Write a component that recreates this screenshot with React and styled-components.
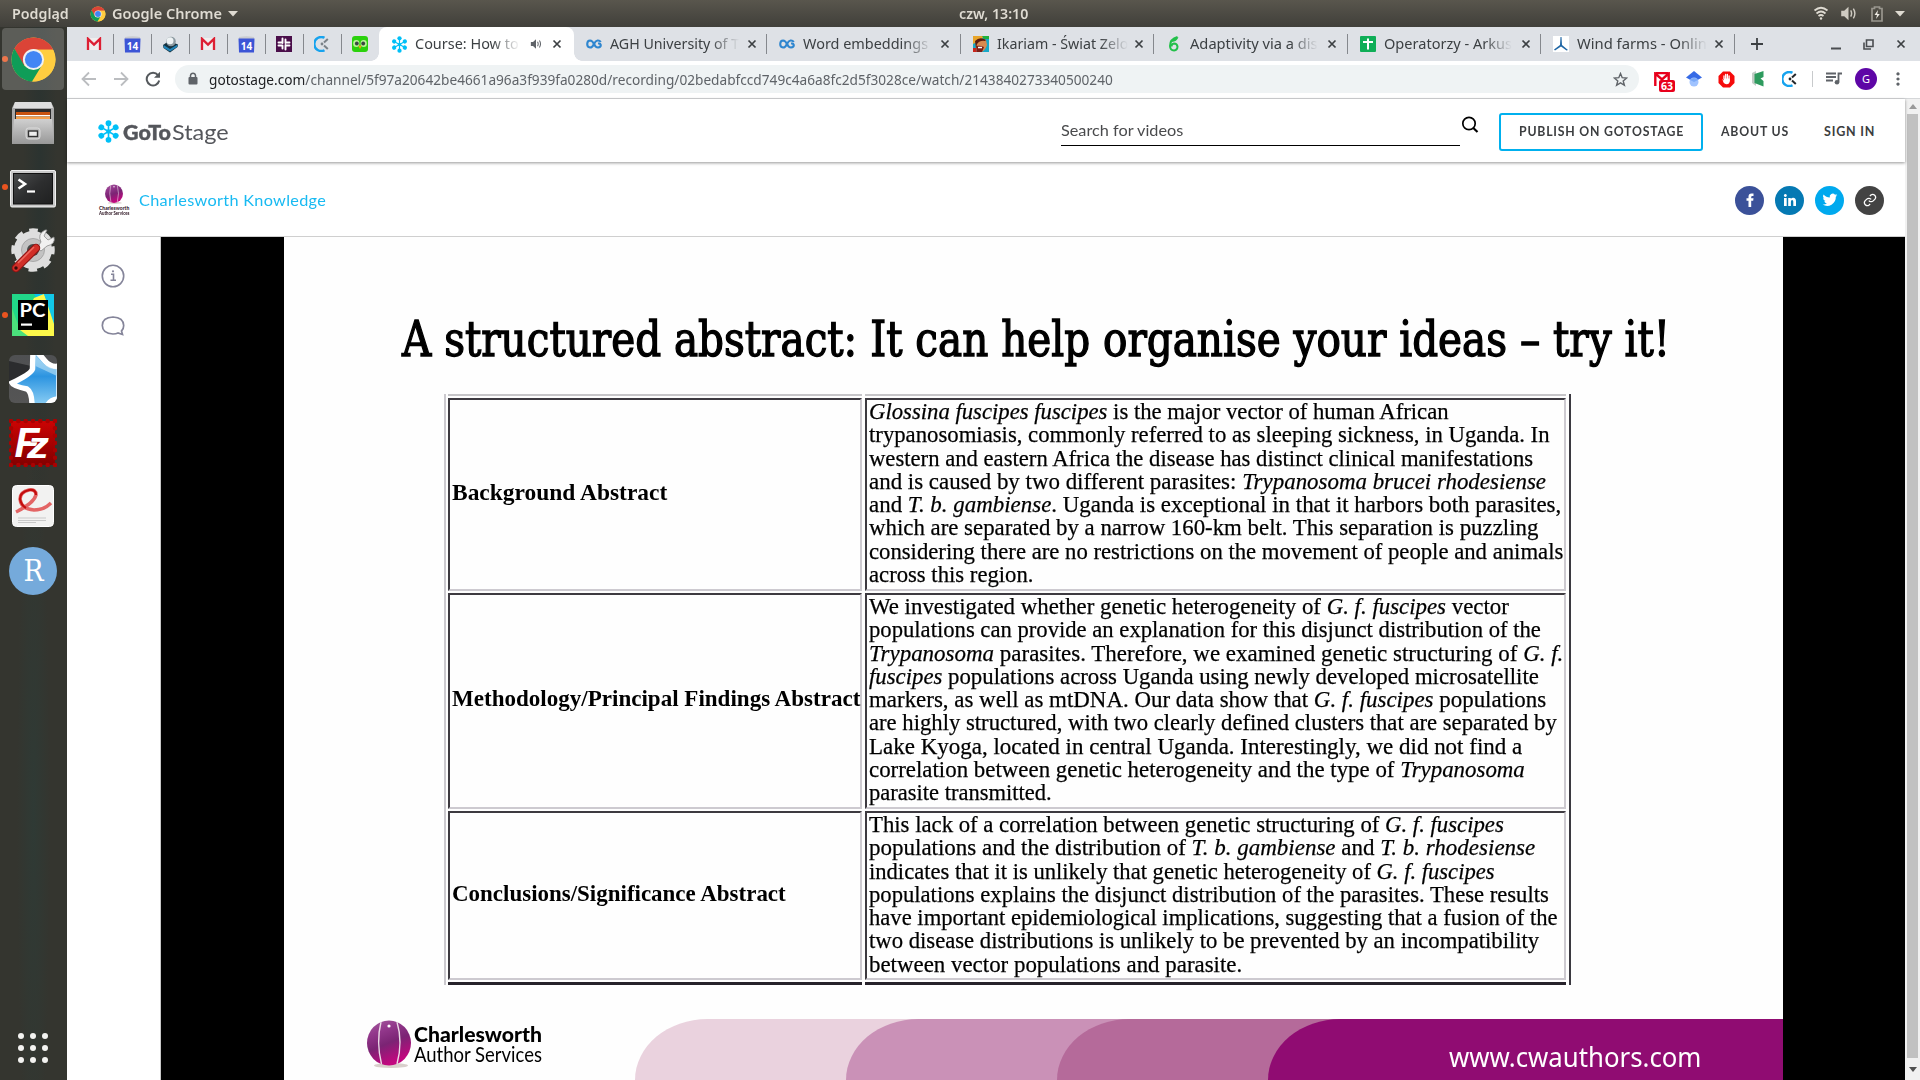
import React, { useLayoutEffect, useRef } from "react";
import styled, { createGlobalStyle, css } from "styled-components";

const ui = `"Noto Sans", "Open Sans", sans-serif`;
const lato = `Lato, "Open Sans", sans-serif`;
const serif = `"Liberation Serif", "Times New Roman", serif`;

const Global = createGlobalStyle`
  * { box-sizing: border-box; }
  body { margin: 0; overflow: hidden; background: #33352f; }
  svg { display: block; flex: none; }
`;

/* ---------- text set to a given measure ---------- */
const Measure = styled.span`
  display: block;
  flex: none;
  white-space: pre;
  width: ${(p) => p.$w}px;
`;
const Glyphs = styled.span`
  display: inline-block;
  transform-origin: 0 50%;
`;
function Fit({ w, children }) {
  const ref = useRef(null);
  useLayoutEffect(() => {
    const el = ref.current;
    el.style.transform = `scaleX(${w / el.offsetWidth})`;
  }, [w]);
  return (
    <Measure $w={w}>
      <Glyphs ref={ref}>{children}</Glyphs>
    </Measure>
  );
}

/* ---------- shell ---------- */
const Screen = styled.div`
  width: 1920px;
  height: 1080px;
  display: flex;
  flex-direction: column;
  overflow: hidden;
  font-family: ${ui};
`;
const Panel = styled.header`
  flex: none;
  height: 27px;
  display: flex;
  align-items: center;
  padding: 0 12px;
  background: linear-gradient(#59564d, #403f3a);
  color: #dfdbd2;
  font-size: 14px;
  font-weight: 600;
`;
const PanelSide = styled.div`
  flex: ${(p) => (p.$end ? "1" : "none")};
  width: ${(p) => (p.$end ? "auto" : "947px")};
  display: flex;
  align-items: center;
  justify-content: ${(p) => (p.$end ? "flex-end" : "flex-start")};
`;
const Gap = styled.span`
  flex: none;
  width: ${(p) => p.$w}px;
`;
const Desktop = styled.div`
  flex: 1;
  min-height: 0;
  display: flex;
`;
const Dock = styled.nav`
  flex: none;
  width: 67px;
  display: flex;
  flex-direction: column;
  justify-content: space-between;
  background: radial-gradient(ellipse at 60% 12%, #2b3330 0, transparent 30%),
    radial-gradient(ellipse at 50% 75%, #2f3a35 0, transparent 35%), #34352f;
`;
const DockSlot = styled.div`
  height: 64px;
  display: flex;
  align-items: center;
  padding-left: 2px;
`;
const DockDot = styled.span`
  width: 6px;
  height: 6px;
  border-radius: 50%;
  background: ${(p) => (p.$on ? "#e95420" : "transparent")};
`;
const DockItem = styled.div`
  width: 62px;
  height: 62px;
  margin-left: -6px;
  border-radius: 4px;
  display: flex;
  align-items: center;
  justify-content: center;
  background: ${(p) => (p.$active ? "rgba(255,255,255,.2)" : "transparent")};
`;
const AppGrid = styled.div`
  display: grid;
  grid-template-columns: repeat(3, 6px);
  gap: 6px;
  margin: 0 0 17px 18px;
  & > i { width: 6px; height: 6px; border-radius: 50%; background: #f3f3f1; }
`;
const Browser = styled.div`
  flex: 1;
  display: flex;
  flex-direction: column;
  background: #fff;
`;

/* ---------- tabs ---------- */
const TabStrip = styled.div`
  flex: none;
  height: 34px;
  display: flex;
  background: #dee1e6;
  padding-left: 8px;
  color: #3c4043;
`;
const Pinned = styled.div`
  width: 38px;
  height: 34px;
  display: flex;
  align-items: center;
  justify-content: center;
  position: relative;
  ${(p) => p.$sep && css`&::after { content: ""; position: absolute; right: -1px; top: 7px; width: 1px; height: 20px; background: #85888d; }`}
`;
const Tab = styled.div`
  width: 193.5px;
  height: 34px;
  display: flex;
  align-items: center;
  padding-left: 12px;
  font-size: 15px;
  line-height: 20px;
  position: relative;
  ${(p) => p.$active && css`
    width: 194.5px;
    background: #fff;
    border-radius: 8px 8px 0 0;
    &::before, &::after {
      content: ""; position: absolute; bottom: 0; width: 8px; height: 8px;
    }
    &::before { left: -8px; background: radial-gradient(circle at 0 0, transparent 7.5px, #fff 8px); }
    &::after { right: -8px; background: radial-gradient(circle at 100% 0, transparent 7.5px, #fff 8px); }
  `}
  ${(p) => p.$sep && css`&::after { content: ""; position: absolute; right: 0; top: 7px; width: 1px; height: 20px; background: #85888d; }`}
`;
const TabTitle = styled.div`
  width: ${(p) => p.$w}px;
  margin-left: 8px;
  padding-bottom: 2px;
  flex: none;
  overflow: hidden;
  -webkit-mask-image: linear-gradient(90deg, #000 calc(100% - 28px), transparent);
  mask-image: linear-gradient(90deg, #000 calc(100% - 28px), transparent);
`;
const TabIcon = styled.span`
  width: 16px;
  height: 16px;
  flex: none;
  display: flex;
  align-items: center;
  justify-content: center;
`;
const WindowButtons = styled.div`
  display: flex;
  flex: 1;
  align-items: center;
  padding-left: 16px;
`;

/* ---------- toolbar ---------- */
const Toolbar = styled.div`
  flex: none;
  height: 38px;
  display: flex;
  align-items: center;
  padding: 0 0 1px 14px;
  border-bottom: 1px solid #d5d7d9;
`;
const NavButton = styled.span`
  width: 32px;
  display: flex;
`;
const Omnibox = styled.div`
  width: 1464px;
  height: 28px;
  margin-left: -2px;
  border-radius: 14px;
  background: #eff3f4;
  display: flex;
  align-items: center;
  padding: 0 10px 0 12px;
  color: #5f6368;
  font-size: 14px;
  & b { font-weight: 400; color: #202124; }
`;
const Extensions = styled.div`
  display: flex;
  align-items: center;
  padding-left: 7px;
`;
const Ext = styled.span`
  width: 32px;
  height: 28px;
  display: flex;
  align-items: center;
  justify-content: center;
  position: relative;
`;
const Badge = styled.span`
  position: absolute;
  left: 13px;
  top: 15px;
  width: 16px;
  height: 12px;
  border-radius: 2px;
  background: #e8001c;
  color: #fff;
  font-size: 10.5px;
  line-height: 12px;
  font-weight: 700;
  text-align: center;
`;
const ExtRule = styled.span`
  width: 1px;
  height: 16px;
  margin: 0 5px 0 6px;
  background: #c8cacc;
`;
const Avatar = styled.span`
  width: 22px;
  height: 22px;
  border-radius: 50%;
  background: #5e06a6;
  color: #fff;
  font-size: 11px;
  line-height: 22px;
  text-align: center;
`;

/* ---------- page ---------- */
const Viewport = styled.div`
  flex: 1;
  min-height: 0;
  display: flex;
`;
const Page = styled.div`
  width: 1838px;
  display: flex;
  flex-direction: column;
`;
const Scrollbar = styled.div`
  width: 15px;
  background: #f1f1f1;
  display: flex;
  flex-direction: column;
  align-items: center;
`;
const Thumb = styled.div`
  flex: 1;
  width: 11px;
  background: #c1c1c1;
`;
const ScrollArrow = styled.div`
  height: ${(p) => p.$h}px;
  display: flex;
  align-items: center;
  justify-content: center;
`;
const SiteHeader = styled.div`
  flex: none;
  height: 63px;
  display: flex;
  align-items: center;
  padding-left: 30px;
  font-family: ${lato};
  color: #44464a;
  box-shadow: 0 1px 3px rgba(0, 0, 0, 0.42);
  position: relative;
`;
const Brand = styled.div`
  display: flex;
  align-items: center;
  height: 30px;
  width: 964px;
  padding-top: 2px;
  font-size: 21px;
  line-height: 26px;
  color: #54565b;
  & svg { margin: -1px 3px 0 0; }
`;
const Heavy = styled.span`
  font-weight: 900;
  -webkit-text-stroke: 0.4px #54565b;
`;
const SearchField = styled.div`
  width: 399px;
  height: 32px;
  display: flex;
  align-items: center;
  margin-bottom: 1px;
  padding-bottom: 1px;
  border-bottom: 1px solid #000;
  font-size: 16px;
  color: #4a4b4d;
`;
const SearchIcon = styled.div`
  width: 39px;
  padding: 0 0 11px 1px;
`;
const Publish = styled.div`
  width: 204px;
  height: 38px;
  margin-top: 2px;
  border: 2px solid #00b0ee;
  border-radius: 3px;
  display: flex;
  align-items: center;
  justify-content: center;
`;
const NavText = styled.div`
  font-size: 12.5px;
  line-height: 18px;
  font-weight: 700;
  letter-spacing: 0.8px;
  color: #3c3e40;
`;
const NavLink = styled(NavText)`
  margin-top: 2px;
`;
const ChannelBar = styled.div`
  flex: none;
  height: 75px;
  display: flex;
  align-items: center;
  padding: 2px 20px 0 32px;
  border-bottom: 1px solid #cfcfcf;
  font-family: ${lato};
  color: #18baf2;
  font-size: 16px;
`;
const ChannelLogo = styled.div`
  width: 40px;
  font-size: 5px;
  line-height: 5.5px;
  font-weight: 900;
  color: #3a2330;
  & svg { margin: 0 0 1px 6px; }
`;
const ChannelName = styled.div`
  padding-bottom: 1px;
  letter-spacing: 0.3px;
`;
const Share = styled.div`
  margin-left: auto;
  display: flex;
  gap: 11px;
  padding-right: 1px;
`;
const Round = styled.div`
  width: 29px;
  height: 29px;
  border-radius: 50%;
  background: ${(p) => p.$bg};
  display: flex;
  align-items: center;
  justify-content: center;
`;
const Stage = styled.div`
  flex: 1;
  min-height: 0;
  display: flex;
`;
const SideMenu = styled.div`
  width: 94px;
  border-right: 1px solid #c8c8c8;
  display: flex;
  flex-direction: column;
  align-items: center;
  padding: 27px 1px 0 0;
  gap: 26px;
`;
const Player = styled.div`
  flex: 1;
  background: #000;
  padding: 0 122px 0 123px;
`;
const Slide = styled.div`
  height: 100%;
  background: #fefefe;
  display: flex;
  flex-direction: column;
  color: #000;
`;
const SlideTitle = styled.div`
  margin: 73px 0 26px 118px;
  height: 58px;
  line-height: 58px;
  font-family: "DejaVu Serif Condensed", "DejaVu Serif", serif;
  font-stretch: condensed;
  font-size: 48px;
  -webkit-text-stroke: 1.3px #000;
`;
const Table = styled.div`
  margin-left: 160px;
  width: 1127px;
  height: 591px;
  padding: 0 3px 0 2px;
  border-left: 2px solid #cbc9ce;
  border-right: 2px solid #3b3940;
  display: grid;
  grid-template-columns: 414px 701px;
  grid-template-rows: 2px 193px 216px 169px 3px;
  column-gap: 3px;
  row-gap: 2px;
  font-family: ${serif};
  font-size: 24px;
  line-height: 23.27px;
`;
const Edge = styled.div`
  background: ${(p) => (p.$dark ? "#26222a" : "#c6c5c8")};
`;
const Cell = styled.div`
  border: 2px solid;
  border-color: #3d3a40 #cdcad0 #cdcad0 #3d3a40;
  padding: ${(p) => (p.$head ? "0 0 4px 2px" : "0 0 0 2px")};
  display: flex;
  flex-direction: column;
  justify-content: ${(p) => (p.$head ? "center" : "flex-start")};
  font-weight: ${(p) => (p.$head ? 700 : 400)};
  -webkit-text-stroke: ${(p) => (p.$head ? 0 : "0.25px #000")};
`;
const SlideFooter = styled.div`
  margin-top: auto;
  height: 61px;
  display: flex;
  padding-left: 83px;
`;
const FooterBrand = styled.div`
  width: 268px;
  display: flex;
  gap: 3px;
  & > svg { margin-top: 1px; }
`;
const FooterName = styled.div`
  font-family: ${lato};
  font-size: 20.5px;
  line-height: 20px;
  padding-top: 5px;
  & strong { font-weight: 900; }
`;
const Band = styled.div`
  flex: 1;
  height: 61px;
  padding-left: 211px;
  display: flex;
  border-top-left-radius: 76px 64px;
  background: ${(p) => p.$bg};
`;
const SiteUrl = styled.div`
  padding: 19px 0 0;
  margin-left: -30px;
  color: #fff;
  font-size: 27px;
  line-height: 37px;
`;

/* ---------- drawings ---------- */
const Chrome = ({ s }) => (
  <svg width={s} height={s} viewBox="0 0 48 48">
    <circle cx="24" cy="24" r="22.5" fill="#ffcd40" />
    <path d="M4.5 12.8A22.5 22.5 0 0 1 43.5 12.8L44 14H24L14 30Z" fill="#db4437" />
    <path d="M22.5 46.5A22.5 22.5 0 0 0 44 14H24L33 29.5Z" fill="#ffcd40" />
    <path d="M4.5 12.8L14 30L24 14Z" fill="#db4437" />
    <path d="M4.5 12.8L14.5 30Q19 34 24 33.5L32 31L22.5 46.5A22.5 22.5 0 0 1 4.5 12.8Z" fill="#0f9d58" />
    <circle cx="24" cy="24" r="10.8" fill="#f1f1f1" />
    <circle cx="24" cy="24" r="8.8" fill="#4285f4" />
  </svg>
);
const Files = () => (
  <svg width="44" height="46" viewBox="0 0 44 46">
    <defs><linearGradient id="fg" x2="0" y2="1"><stop stopColor="#d0d0d0" /><stop offset="1" stopColor="#989898" /></linearGradient></defs>
    <path d="M4 2H40L43 8V44H1V8Z" fill="#a9a9a9" />
    <path d="M4 2H40L42 8H2Z" fill="#dedede" />
    <rect x="4" y="9" width="36" height="12" fill="#2b2b2b" />
    <rect x="5" y="12" width="34" height="3" fill="#c8530f" />
    <rect x="5" y="15" width="34" height="1.500" fill="#fff" />
    <rect x="5" y="16.500" width="34" height="2.500" fill="#f5a04d" />
    <path d="M3 19H41L43 44H1Z" fill="url(#fg)" />
    <rect x="15" y="28" width="14" height="11" rx="2.5" fill="#bdbdbd" stroke="#dcdcdc" />
    <rect x="17.500" y="31" width="9" height="5.500" fill="#eee" stroke="#333" strokeWidth="1.400" />
  </svg>
);
const Terminal = () => (
  <svg width="46" height="42" viewBox="0 -4 46 42">
    <defs><linearGradient id="tg" x2="1" y2="1"><stop stopColor="#4b4d4e" /><stop offset=".5" stopColor="#2d2e2f" /><stop offset="1" stopColor="#1f2020" /></linearGradient></defs>
    <rect x=".5" y=".5" width="45" height="36.500" rx="1.500" fill="#c9c9c9" stroke="#f1f1f1" />
    <rect x="3.500" y="3.500" width="39" height="30.500" fill="url(#tg)" stroke="#111" />
    <path d="M8.500 9.500L15 14L8.500 18.500" fill="none" stroke="#fff" strokeWidth="2.600" />
    <path d="M17 21.500H25" stroke="#fff" strokeWidth="2.200" />
  </svg>
);
const Settings = () => (
  <svg width="46" height="46" viewBox="0 0 46 46">
    <circle cx="23" cy="22" r="15" fill="none" stroke="#dedede" strokeWidth="8" />
    <circle cx="23" cy="22" r="19.500" fill="none" stroke="#dedede" strokeWidth="4.500" strokeDasharray="8.500 6.800" strokeDashoffset="4.250" />
    <circle cx="23" cy="22" r="11.500" fill="#c3c3c3" stroke="#a9a9a9" />
    <circle cx="23" cy="22" r="6" fill="#4a4a48" />
    <path d="M27 20L31 14Q27 6 35 2L37 2L34 8L38 12L44 9Q46 16 37 18L31 23Z" fill="#f1f1f1" stroke="#8c8c8c" strokeWidth=".8" />
    <path d="M6 40L26 20" stroke="#8e1414" strokeWidth="8.500" strokeLinecap="round" />
    <path d="M6 40L26 20" stroke="#d12f28" strokeWidth="6.500" strokeLinecap="round" />
    <path d="M8 35L24 19" stroke="#ee6a60" strokeWidth="1.500" />
    <circle cx="6" cy="40" r="1.700" fill="#3b0b0b" />
  </svg>
);
const PyCharm = () => (
  <svg width="42" height="42" viewBox="0 0 42 42">
    <rect width="42" height="42" fill="#21d789" />
    <path d="M22 0H42V26L30 12Z" fill="#07c3f2" />
    <path d="M22 4L32 0L42 24V42H12L6 36Z" fill="#fcf84a" />
    <path d="M32 0H42V30Z" fill="#12c8e8" />
    <path d="M0 14L8 36L16 42H0Z" fill="#4be07c" />
    <rect x="6" y="6" width="30" height="30" fill="#000" />
    <text x="7.500" y="22.500" fill="#fff" fontFamily="Lato, sans-serif" fontWeight="700" fontSize="18.500" textLength="26" lengthAdjust="spacingAndGlyphs">PC</text>
    <rect x="9" y="29.500" width="11" height="2.200" fill="#fff" />
  </svg>
);
const StarApp = () => (
  <svg width="48" height="48" viewBox="0 0 48 48">
    <defs>
      <clipPath id="sc"><rect width="48" height="48" rx="6" /></clipPath>
      <linearGradient id="sb" x2="0" y2="1"><stop stopColor="#4f5052" /><stop offset="1" stopColor="#555" /></linearGradient>
      <linearGradient id="ss" x2="0" y2="1"><stop stopColor="#8fcdf4" /><stop offset=".45" stopColor="#2c94e0" /><stop offset="1" stopColor="#8ed0f5" /></linearGradient>
    </defs>
    <g clipPath="url(#sc)">
      <rect width="48" height="48" fill="url(#sb)" />
      <path d="M0 6L22 11V28L0 26Z" fill="#2b2c2e" />
      <path d="M24 -3L23.500 14Q22 19 3 28Q4 31 18 34Q23 37 23 51H38Q42 44 50 44V11Q42 13 36 6Q31 0 28 -3Z" fill="url(#ss)" stroke="#fff" strokeWidth="5.500" />
      <path d="M26.500 11L48 21V14Q41 14 34 8L28 2H26.500Z" fill="#a9d8f4" opacity=".7" />
    </g>
  </svg>
);
const FileZilla = () => (
  <svg width="48" height="48" viewBox="0 0 48 48">
    <defs><linearGradient id="zg" x2="0" y2="1"><stop stopColor="#cc0303" /><stop offset="1" stopColor="#830000" /></linearGradient></defs>
    <rect x="2" y="2" width="44" height="44" fill="url(#zg)" />
    <rect x="2" y="2" width="44" height="44" fill="none" stroke="#a80202" strokeWidth="4.500" strokeDasharray="0 7.333" strokeLinecap="round" />
    <g fill="#fff" fontFamily="Liberation Sans, sans-serif" fontWeight="700" fontStyle="italic">
      <text x="5.500" y="37.500" fontSize="43" textLength="25" lengthAdjust="spacingAndGlyphs">F</text>
      <text x="18" y="39" fontSize="37" textLength="22" lengthAdjust="spacingAndGlyphs" stroke="#a00202" strokeWidth="1" paintOrder="stroke">z</text>
    </g>
  </svg>
);
const DocViewer = () => (
  <svg width="42" height="44" viewBox="0 0 42 44">
    <rect x=".5" y=".5" width="41" height="41" rx="4" fill="#f2f2f1" stroke="#fff" />
    <path d="M4 27Q22 18 24 10Q24 4 17 5Q8 7 8 14Q9 24 22 25Q32 25 39 18" fill="none" stroke="#e36565" strokeWidth="3.500" />
    <path d="M24 10Q24 4 17 5Q8 7 8 14Q9 20 14 23" fill="none" stroke="#c30d0d" strokeWidth="2.200" />
    <path d="M6 33H34M6 35.500H34M6 37.500H24" stroke="#c9c9c9" strokeWidth="1" />
  </svg>
);
const RStudio = () => (
  <svg width="48" height="48" viewBox="0 0 48 48">
    <circle cx="24" cy="24" r="24" fill="#75aadb" />
    <text x="24.500" y="33.500" textAnchor="middle" fill="#fff" fontFamily="DejaVu Serif, serif" fontSize="29" textLength="20" lengthAdjust="spacingAndGlyphs">R</text>
  </svg>
);
const Gmail = () => (
  <svg width="16" height="14" viewBox="0 0 16 14">
    <rect x="1" y="1" width="14" height="12" fill="#f0eeee" />
    <path d="M2 13V1.800L8 7.600L14 1.800V13" fill="none" stroke="#dd1f33" strokeWidth="2.300" />
  </svg>
);
const Calendar = () => (
  <svg width="17" height="17" viewBox="0 0 17 17">
    <path d="M1 3V1Q8.500 -.5 16 1V3Z" fill="#c9cbd0" />
    <path d="M.5 2.500H16.500L16 16.500H1Z" fill="#3c55d6" />
    <text x="8.500" y="13.500" textAnchor="middle" fill="#fff" fontFamily="Noto Sans, sans-serif" fontWeight="700" fontSize="10">14</text>
  </svg>
);
const Dropbox3d = () => (
  <svg width="17" height="17" viewBox="0 0 17 17">
    <path d="M1 9L7 5L16 8.500L15.500 11L8 16.500L1.500 12Z" fill="#15313f" />
    <path d="M1.500 9L8 13L15.500 8.500L15 11L8 15.500L2 12Z" fill="#2083b8" />
    <circle cx="9" cy="5.500" r="4.800" fill="#8d9aa1" />
    <circle cx="8" cy="4.800" r="3.500" fill="#eef2f4" />
  </svg>
);
const Slack = () => (
  <svg width="16" height="16" viewBox="0 0 16 16">
    <rect width="16" height="16" fill="#4a0e4a" />
    <path d="M6.500 2.500V7M9.500 3.500V7M2.500 6.500H6.500M9.500 6.500H13.500M2.500 9.500H6.500M9.500 9.500H13.500M6.500 9.500V12.500M9.500 9V13.500" stroke="#fff" strokeWidth="1.900" strokeLinecap="round" />
  </svg>
);
const Clockify = ({ dark = "#7b8288" }) => (
  <svg width="16" height="16" viewBox="0 0 16 16">
    <path d="M10.500 1.800A7 7 0 1 0 10.500 14.200" fill="none" stroke="#17a3ee" strokeWidth="2.400" />
    <path d="M10 6.500L13.800 3M10 9.500L13.800 13" stroke={dark} strokeWidth="2" />
    <circle cx="8" cy="8" r="1.400" fill={dark} />
  </svg>
);
const Duolingo = () => (
  <svg width="16" height="16" viewBox="0 0 16 16">
    <rect width="16" height="16" rx="3" fill="#2bd10d" />
    <rect x="1.200" y="4" width="6.200" height="7" rx="3" fill="#b9f29a" />
    <rect x="8.600" y="4" width="6.200" height="7" rx="3" fill="#b9f29a" />
    <circle cx="4.800" cy="7.500" r="1.900" fill="#3a4642" />
    <circle cx="11.200" cy="7.500" r="1.900" fill="#3a4642" />
    <path d="M6.300 9.500H9.700L8 13Z" fill="#f5a21a" />
  </svg>
);
const Daisy = ({ s }) => (
  <svg width={s} height={s} viewBox="0 0 24 24">
    {[0, 60, 120, 180, 240, 300].map((a) => (
      <g key={a} transform={`rotate(${a} 12 12)`} fill="#00c0f7" stroke="#00c0f7">
        <circle cx="12" cy="3.300" r="3" stroke="none" />
        <path d="M12 4V12" strokeWidth="1.700" />
      </g>
    ))}
    <circle cx="12" cy="12" r="2.300" fill="#00c0f7" />
  </svg>
);
const Infinity8 = () => (
  <svg width="16" height="10" viewBox="0 0 16 10">
    <path d="M14.800 3Q13.500 1.200 11.500 1.500Q9.500 1.800 8 5Q6.500 8.500 4 8.500Q1.200 8.200 1.200 5Q1.400 1.500 4 1.500Q6.500 1.700 8 5Q9.500 8.500 12 8.500Q14.800 8.200 14.800 6Q14.500 4.200 12 4.500" fill="none" stroke="#2f86cf" strokeWidth="2.100" />
  </svg>
);
const Ikariam = () => (
  <svg width="16" height="16" viewBox="0 0 16 16">
    <rect width="16" height="16" fill="#19a8c8" />
    <path d="M0 0H11L8 4L0 8Z" fill="#e8a52b" />
    <path d="M9 0H16V3H11Z" fill="#1fb13e" />
    <path d="M3 5Q7 1 13 4L14 9Q12 15 8 16H5Q2 13 3 5Z" fill="#d98a50" />
    <path d="M2 5Q7 0 13 4L12 5Q7 4 4 8L3 12Z" fill="#5a1d10" />
    <path d="M3 10Q7 9 11 11L9 16H4Z" fill="#7c1f16" />
    <path d="M5 11.500H9" stroke="#fff" strokeWidth="1.500" />
    <path d="M0 12H3L4 16H0Z" fill="#c8251c" />
  </svg>
);
const Leaf = () => (
  <svg width="14" height="16" viewBox="0 0 14 16">
    <path d="M10.500 1Q3 3 3 10Q3.200 14.500 7 14.500Q10.500 14 10.500 10.500Q10 7.500 7 7.500Q4.500 7.800 4.500 10.500M5 5Q9 5 10.500 1" fill="none" stroke="#22c04a" strokeWidth="2" />
  </svg>
);
const Sheets = () => (
  <svg width="16" height="16" viewBox="0 0 16 16">
    <rect width="16" height="16" rx="1" fill="#0fae57" />
    <path d="M8 2.500V13.500M3 6H13" stroke="#fff" strokeWidth="2" />
  </svg>
);
const Wind = () => (
  <svg width="16" height="16" viewBox="0 0 16 16">
    <rect width="16" height="16" fill="#fff" />
    <path d="M7.500 1H8.500L9 9L15 14L13.500 14.500L8 10.500L2 14.500L1 13.500L7 9Z" fill="#1f66a5" />
  </svg>
);
const Stroke = ({ w = 16, h = w, d, c = "#5f6368", sw = 1.8, vb }) => (
  <svg width={w} height={h} viewBox={vb || `0 0 ${w} ${h}`} fill="none" stroke={c} strokeWidth={sw}>
    <path d={d} />
  </svg>
);
const Solid = ({ w = 16, h = w, d, c = "#5f6368", vb }) => (
  <svg width={w} height={h} viewBox={vb || `0 0 ${w} ${h}`} fill={c}>
    <path d={d} />
  </svg>
);
const Speaker = ({ c, s = 14 }) => (
  <svg width={s} height={s} viewBox="0 0 14 14">
    <path d="M1 4.800H3.500L7 1.500V12.500L3.500 9.200H1Z" fill={c} />
    <path d="M8.800 4.500Q10.300 7 8.800 9.500M11 3Q13.500 7 11 11" fill="none" stroke={c} strokeWidth="1.200" />
  </svg>
);
const Ball = ({ w, h, id }) => (
  <svg width={w} height={h} viewBox="0 0 44 50">
    <defs><linearGradient id={id} x2=".4" y2="1"><stop stopColor="#a5619f" /><stop offset=".3" stopColor="#93388c" /><stop offset=".6" stopColor="#7b2474" /><stop offset="1" stopColor="#c2077f" /></linearGradient></defs>
    <ellipse cx="24" cy="45.500" rx="17" ry="2.500" fill="#d8cfcb" />
    <ellipse cx="22" cy="23" rx="22" ry="22.500" fill={`url(#${id})`} />
    <path d="M14 2Q9 22 14.500 44M30 2Q36 22 30 44" fill="none" stroke="#eadbe6" strokeWidth="1.400" />
    <circle cx="22" cy="6" r="1.600" fill="#fff" />
  </svg>
);
const CloseX = () => <Stroke w={10} d="M1.500 1.500L8.500 8.500M8.500 1.500L1.500 8.500" c="#3c4043" sw={1.7} />;

/* ---------- data ---------- */
const dock = [
  [<Chrome s={47} />, true, true],
  [<Files />],
  [<Terminal />, true],
  [<Settings />],
  [<PyCharm />, true],
  [<StarApp />],
  [<FileZilla />],
  [<DocViewer />],
  [<RStudio />],
];
const pinned = [<Gmail />, <Calendar />, <Dropbox3d />, <Gmail />, <Calendar />, <Slack />, <Clockify />, <Duolingo />];
const tabs = [
  [<Infinity8 />, "AGH University of T", 129],
  [<Infinity8 />, "Word embeddings ", 129],
  [<Ikariam />, "Ikariam - Świat Zelo", 131],
  [<Leaf />, "Adaptivity via a dis", 128],
  [<Sheets />, "Operatorzy - Arkus", 128],
  [<Wind />, "Wind farms - Onlin", 130],
];
const rows = [
  ["Background Abstract", 215, [
    [580, <><i>Glossina fuscipes fuscipes</i> is the major vector of human African</>],
    [681, "trypanosomiasis, commonly referred to as sleeping sickness, in Uganda. In"],
    [664, "western and eastern Africa the disease has distinct clinical manifestations"],
    [677, <>and is caused by two different parasites: <i>Trypanosoma brucei rhodesiense</i></>],
    [692.500, <>and <i>T. b. gambiense</i>. Uganda is exceptional in that it harbors both parasites,</>],
    [669, "which are separated by a narrow 160-km belt. This separation is puzzling"],
    [694.500, "considering there are no restrictions on the movement of people and animals"],
    [164.500, "across this region."],
  ]],
  ["Methodology/Principal Findings Abstract", 408, [
    [640, <>We investigated whether genetic heterogeneity of <i>G. f. fuscipes</i> vector</>],
    [672, "populations can provide an explanation for this disjunct distribution of the"],
    [694, <><i>Trypanosoma</i> parasites. Therefore, we examined genetic structuring of <i>G. f.</i></>],
    [670, <><i>fuscipes</i> populations across Uganda using newly developed microsatellite</>],
    [677, <>markers, as well as mtDNA. Our data show that <i>G. f. fuscipes</i> populations</>],
    [688, "are highly structured, with two clearly defined clusters that are separated by"],
    [653, "Lake Kyoga, located in central Uganda. Interestingly, we did not find a"],
    [656, <>correlation between genetic heterogeneity and the type of <i>Trypanosoma</i></>],
    [183, "parasite transmitted."],
  ]],
  ["Conclusions/Significance Abstract", 334, [
    [635, <>This lack of a correlation between genetic structuring of <i>G. f. fuscipes</i></>],
    [666, <>populations and the distribution of <i>T. b. gambiense</i> and <i>T. b. rhodesiense</i></>],
    [626, <>indicates that it is unlikely that genetic heterogeneity of <i>G. f. fuscipes</i></>],
    [680, "populations explains the disjunct distribution of the parasites. These results"],
    [689, "have important epidemiological implications, suggesting that a fusion of the"],
    [670, "two disease distributions is unlikely to be prevented by an incompatibility"],
    [373, "between vector populations and parasite."],
  ]],
];

/* ---------- sections ---------- */
const TopPanel = () => (
  <Panel>
    <PanelSide>
      <Fit w={57}>Podgląd</Fit>
      <Gap $w={21} />
      <Chrome s={16} />
      <Gap $w={6} />
      <Fit w={110}>Google Chrome</Fit>
      <Gap $w={6} />
      <Solid w={10} h={6} d="M0 0H10L5 5.500Z" c="#dfdbd2" />
    </PanelSide>
    <Fit w={69}>czw, 13:10</Fit>
    <PanelSide $end>
      <svg width="16" height="15" viewBox="0 0 16 15" fill="none" stroke="#dfdbd2" strokeWidth="1.700">
        <path d="M1.500 4.500Q8 -1 14.500 4.500M3.500 7.500Q8 3.500 12.500 7.500M5.500 10Q8 8 10.500 10" />
        <circle cx="8" cy="12.500" r="1.200" fill="#dfdbd2" stroke="none" />
      </svg>
      <Gap $w={11} />
      <Speaker c="#cfcbc2" s={17} />
      <Gap $w={14} />
      <svg width="12" height="16" viewBox="0 0 12 16">
        <path d="M1 2.500H3.500V1H8.500V2.500H11V15H1Z" fill="none" stroke="#99968e" strokeWidth="1.700" />
        <path d="M7 4L3.500 9H6L5 13L8.800 8H6.300Z" fill="#efece5" />
      </svg>
      <Gap $w={12} />
      <Solid w={10} h={6} d="M0 0H10L5 5.500Z" c="#dfdbd2" />
      <Gap $w={3} />
    </PanelSide>
  </Panel>
);

const Tabs = () => (
  <TabStrip>
    {pinned.map((icon, i) => (
      <Pinned key={i} $sep={i < 7}>{icon}</Pinned>
    ))}
    <Tab $active>
      <TabIcon><Daisy s={17} /></TabIcon>
      <TabTitle $w={105}><Fit w={104}>Course: How to</Fit></TabTitle>
      <Gap $w={10} />
      <Speaker c="#5f6368" s={12} />
      <Gap $w={10} />
      <CloseX />
    </Tab>
    {tabs.map(([icon, title, w]) => (
      <Tab key={title} $sep>
        <TabIcon>{icon}</TabIcon>
        <TabTitle $w={w}><Fit w={w}>{title}</Fit></TabTitle>
        <Gap $w={137 - w} />
        <CloseX />
      </Tab>
    ))}
    <WindowButtons>
      <Stroke w={12} d="M6 0V12M0 6H12" c="#3c4043" sw={1.8} />
      <Gap $w={68} />
      <Stroke w={10} h={12} d="M0 10.500H10" c="#4a4d51" sw={2} />
      <Gap $w={22} />
      <Stroke w={11} d="M3.500 1H10V7.500H3.500ZM1 3.500V10H8" c="#4a4d51" sw={1.6} />
      <Gap $w={22} />
      <CloseX />
    </WindowButtons>
  </TabStrip>
);

const AddressBar = () => (
  <Toolbar>
    <NavButton><Stroke w={16} d="M15 8H2M8 1.500L1.500 8L8 14.500" c="#bbbdc0" /></NavButton>
    <NavButton><Stroke w={16} d="M1 8H14M8 1.500L14.500 8L8 14.500" c="#bbbdc0" /></NavButton>
    <NavButton>
      <svg width="16" height="16" viewBox="0 0 16 16">
        <path d="M13 4.200A6.300 6.300 0 1 0 14.200 9.500" fill="none" stroke="#55595d" strokeWidth="2" />
        <path d="M15 .8V6.800H9Z" fill="#55595d" />
      </svg>
    </NavButton>
    <Omnibox>
      <svg width="12" height="14" viewBox="0 0 12 14">
        <rect x="1.500" y="5" width="9" height="7.500" rx="1" fill="#5f6368" />
        <path d="M3.500 5.500V3.500Q3.800 1.200 6 1.200Q8.200 1.200 8.500 3.500V5.500" fill="none" stroke="#5f6368" strokeWidth="1.500" />
      </svg>
      <Gap $w={10} />
      <Fit w={904}><b>gotostage.com</b>/channel/5f97a20642be4661a96a3f939fa0280d/recording/02bedabfccd749c4a6a8fc2d5f3028ce/watch/2143840273340500240</Fit>
      <Gap $w={500} />
      <Stroke w={15} d="M7.500 1.500L9.200 5.700L13.700 6L10.200 8.900L11.400 13.300L7.500 10.900L3.600 13.300L4.800 8.900L1.300 6L5.800 5.700Z" sw={1.4} />
    </Omnibox>
    <Extensions>
      <Ext>
        <svg width="16" height="14" viewBox="0 0 16 14"><path d="M1.300 14V1.500L8 7.500L14.700 1.500V14M2 1H14" fill="none" stroke="#e8001c" strokeWidth="2.400" /></svg>
        <Badge>63</Badge>
      </Ext>
      <Ext>
        <svg width="16" height="17" viewBox="0 0 16 17"><path d="M8 0L16 6.500L8 11L0 6.500Z" fill="#356ae6" /><circle cx="8" cy="11" r="4.500" fill="#a0c3ff" /><path d="M4 9Q8 5 12 9L8 11Z" fill="#7baaf7" /></svg>
      </Ext>
      <Ext>
        <svg width="17" height="17" viewBox="0 0 17 17"><path d="M5 .5H12L16.500 5V12L12 16.500H5L.5 12V5Z" fill="#f60b0b" /><path d="M6 8V5M7.700 8V3.500M9.400 8V3.500M11.100 10V5" stroke="#fff" strokeWidth="1.300" strokeLinecap="round" /><path d="M4.300 8L6 9.500V7.500H11.700V10Q11.500 13.300 8.700 13.300Q6.500 13.300 5.500 11.500Z" fill="#fff" /></svg>
      </Ext>
      <Ext>
        <svg width="14" height="16" viewBox="0 0 14 16"><path d="M1 2L5 0V15L1 12Z" fill="#c3cdc7" /><path d="M3.500 3L12.500 0V6L9.500 7.500L12.500 10V15.500L3.500 12Z" fill="#2e9b5e" /></svg>
      </Ext>
      <Ext><Clockify dark="#22272b" /></Ext>
      <ExtRule />
      <Ext>
        <svg width="16" height="14" viewBox="0 0 16 14"><path d="M0 1.500H10M0 5H10M0 8.500H7M12.500 10V1.500H16" fill="none" stroke="#5f6368" strokeWidth="1.800" /><circle cx="11" cy="10.300" r="2.300" fill="#5f6368" /></svg>
      </Ext>
      <Ext><Avatar>G</Avatar></Ext>
      <Ext><Solid w={4} h={14} d="M2 .3A1.600 1.600 0 1 1 1.990 .3ZM2 5.400A1.600 1.600 0 1 1 1.990 5.400ZM2 10.500A1.600 1.600 0 1 1 1.990 10.500Z" /></Ext>
    </Extensions>
  </Toolbar>
);

const Header = () => (
  <SiteHeader>
    <Brand>
      <Daisy s={23} />
      <Fit w={48}><Heavy>GoTo</Heavy></Fit>
      <Gap $w={1} />
      <Fit w={57}>Stage</Fit>
    </Brand>
    <SearchField><Fit w={122}>Search for videos</Fit></SearchField>
    <SearchIcon>
      <svg width="18" height="18" viewBox="0 0 18 18" fill="none" stroke="#000"><circle cx="8" cy="7.500" r="6.200" strokeWidth="1.700" /><path d="M12.300 12L16.500 16" strokeWidth="2.200" /></svg>
    </SearchIcon>
    <Publish><NavText><Fit w={165}>PUBLISH ON GOTOSTAGE</Fit></NavText></Publish>
    <Gap $w={18} />
    <NavLink><Fit w={68}>ABOUT US</Fit></NavLink>
    <Gap $w={35} />
    <NavLink><Fit w={51}>SIGN IN</Fit></NavLink>
  </SiteHeader>
);

const Channel = () => (
  <ChannelBar>
    <ChannelLogo>
      <Ball w={18} h={21} id="b1" />
      <Fit w={30}>Charlesworth</Fit>
      <Fit w={30}>Author Services</Fit>
    </ChannelLogo>
    <ChannelName><Fit w={187}>Charlesworth Knowledge</Fit></ChannelName>
    <Share>
      <Round $bg="#3b5199"><Solid w={14} d="M5.500 14V7.700H3.500V5.200H5.500V3.500Q5.600 .7 8.500 .6H10.500V3H9.200Q8.200 3 8.200 4V5.200H10.500L10.200 7.700H8.200V14Z" c="#fff" /></Round>
      <Round $bg="#0579b3"><Solid w={14} d="M1 5H3.700V13H1ZM2.350 1A1.450 1.450 0 1 1 2.340 1ZM5.200 5H7.800V6.100Q8.500 4.800 10.200 4.800Q13 4.900 13 8.200V13H10.300V8.700Q10.300 7 9.100 7Q7.900 7.100 7.900 8.700V13H5.200Z" c="#fff" /></Round>
      <Round $bg="#00a9ee"><Solid w={16} d="M23 4.900c-.8.400-1.700.6-2.600.7.900-.6 1.600-1.400 2-2.500-.9.500-1.800.9-2.900 1.100A4.500 4.500 0 0 0 11.700 8.300C8 8.100 4.600 6.300 2.400 3.600A4.500 4.500 0 0 0 3.800 9.700c-.7 0-1.400-.2-2-.6 0 2.200 1.500 4.100 3.600 4.500-.7.200-1.400.2-2 .1.600 1.800 2.200 3.100 4.200 3.200A9.100 9.100 0 0 1 .9 18.700 12.900 12.900 0 0 0 20.700 7.200C21.600 6.600 22.400 5.800 23 4.900Z" c="#fff" vb="0 0 24 24" /></Round>
      <Round $bg="#434343"><Stroke w={14} d="M10 13a5 5 0 0 0 7.500.5l3-3a5 5 0 0 0-7-7l-1.700 1.700M14 11a5 5 0 0 0-7.500-.5l-3 3a5 5 0 0 0 7 7l1.700-1.700" c="#fff" sw={2.2} vb="0 0 24 24" /></Round>
    </Share>
  </ChannelBar>
);

const SlideView = () => (
  <Slide>
    <SlideTitle><Fit w={1268}>A structured abstract: It can help organise your ideas – try it!</Fit></SlideTitle>
    <Table>
      <Edge /><Edge />
      {rows.map(([name, w, lines]) => (
        <React.Fragment key={name}>
          <Cell $head><Fit w={w}>{name}</Fit></Cell>
          <Cell>{lines.map(([lw, text], i) => <Fit key={i} w={lw}>{text}</Fit>)}</Cell>
        </React.Fragment>
      ))}
      <Edge $dark /><Edge $dark />
    </Table>
    <SlideFooter>
      <FooterBrand>
        <Ball w={44} h={50} id="b2" />
        <FooterName>
          <Fit w={128}><strong>Charlesworth</strong></Fit>
          <Fit w={128}>Author Services</Fit>
        </FooterName>
      </FooterBrand>
      <Band $bg="#ead2de">
        <Band $bg="#ca91b7">
          <Band $bg="#b56a9a">
            <Band $bg="#900c72">
              <SiteUrl><Fit w={252}>www.cwauthors.com</Fit></SiteUrl>
            </Band>
          </Band>
        </Band>
      </Band>
    </SlideFooter>
  </Slide>
);

export default function App() {
  return (
    <>
      <Global />
      <Screen>
        <TopPanel />
        <Desktop>
          <Dock>
            <div>
              {dock.map(([icon, on, active], i) => (
                <DockSlot key={i}><DockDot $on={on} /><DockItem $active={active}>{icon}</DockItem></DockSlot>
              ))}
            </div>
            <AppGrid>{Array.from({ length: 9 }, (_, i) => <i key={i} />)}</AppGrid>
          </Dock>
          <Browser>
            <Tabs />
            <AddressBar />
            <Viewport>
              <Page>
                <Header />
                <Channel />
                <Stage>
                  <SideMenu>
                    <svg width="24" height="24" viewBox="0 0 24 24" fill="none" stroke="#85859a" strokeWidth="1.600">
                      <circle cx="12" cy="12" r="10.700" /><path d="M10 10.300H12.500V16M9.500 16.300H15" /><circle cx="12" cy="7.300" r="1.100" fill="#85859a" stroke="none" />
                    </svg>
                    <svg width="24" height="24" viewBox="0 0 24 24" fill="none" stroke="#85859a" strokeWidth="1.700">
                      <path d="M12 3Q1.300 3.500 1.300 11.500Q1.500 19.500 12 20Q15 20 17 19L21.500 20.500L20.500 17Q22.700 15 22.700 11.500Q22.500 3.500 12 3Z" />
                    </svg>
                  </SideMenu>
                  <Player><SlideView /></Player>
                </Stage>
              </Page>
              <Scrollbar>
                <ScrollArrow $h={15}><Solid w={8} h={5} d="M0 5H8L4 0Z" c="#9a9a9a" /></ScrollArrow>
                <Thumb />
                <ScrollArrow $h={22}><Solid w={8} h={5} d="M0 0H8L4 5Z" c="#505050" /></ScrollArrow>
              </Scrollbar>
            </Viewport>
          </Browser>
        </Desktop>
      </Screen>
    </>
  );
}
